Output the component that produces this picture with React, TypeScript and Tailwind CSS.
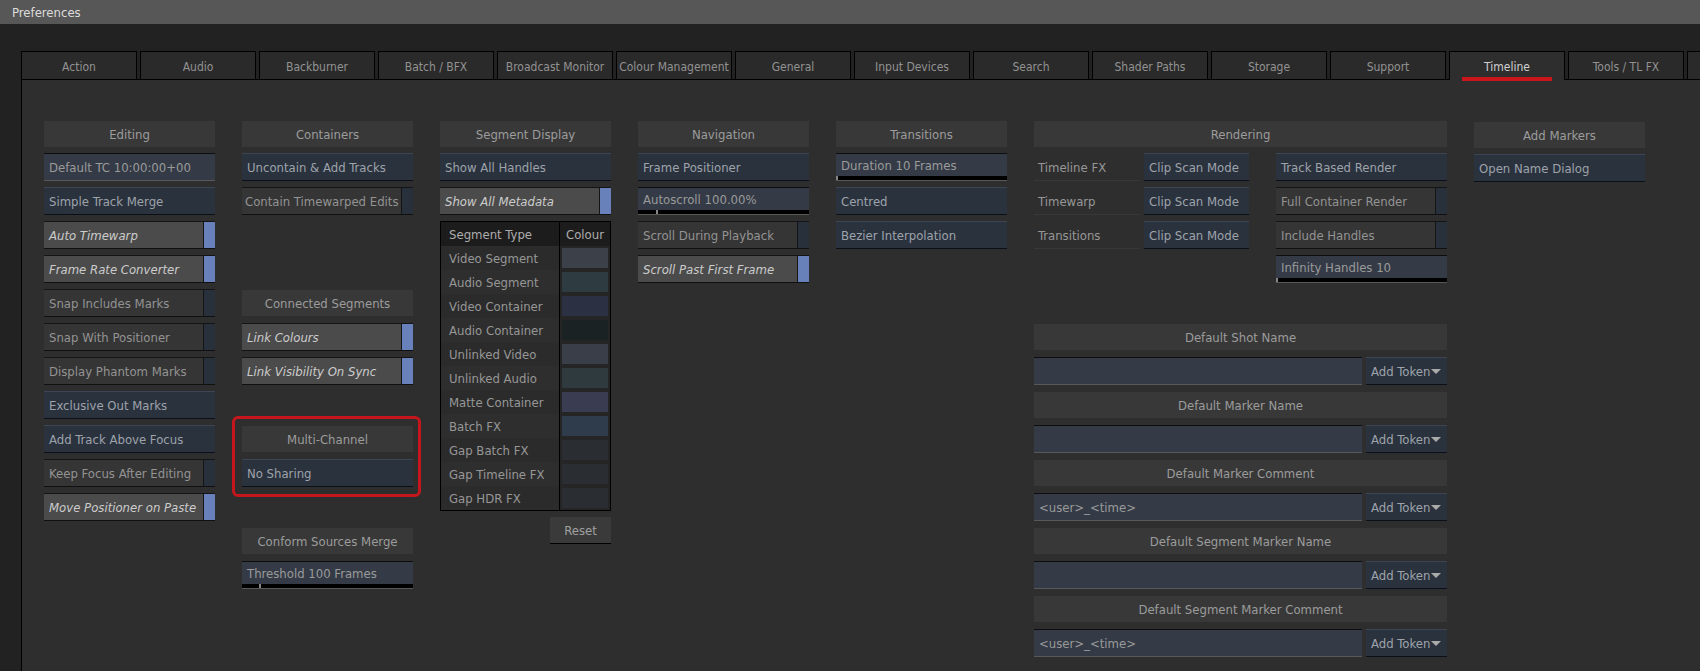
import React from "react";

const tabs = [
  "Action",
  "Audio",
  "Backburner",
  "Batch / BFX",
  "Broadcast Monitor",
  "Colour Management",
  "General",
  "Input Devices",
  "Search",
  "Shader Paths",
  "Storage",
  "Support",
  "Timeline",
  "Tools / TL FX",
  "",
];

const segmentRows = [
  { name: "Video Segment", colour: "bg-[#3b4049]" },
  { name: "Audio Segment", colour: "bg-[#2e3b40]" },
  { name: "Video Container", colour: "bg-[#2b3143]" },
  { name: "Audio Container", colour: "bg-[#1b2224]" },
  { name: "Unlinked Video", colour: "bg-[#3a3e48]" },
  { name: "Unlinked Audio", colour: "bg-[#2e3a3e]" },
  { name: "Matte Container", colour: "bg-[#3a3d52]" },
  { name: "Batch FX", colour: "bg-[#2e3c4c]" },
  { name: "Gap Batch FX", colour: "bg-[#2a2d31]" },
  { name: "Gap Timeline FX", colour: "bg-[#2a2d31]" },
  { name: "Gap HDR FX", colour: "bg-[#2a2d32]" },
];

function Header({ label, mid }: { label: string; mid?: boolean }) {
  return (
    <div className={mid ? "h-[28px] pt-px" : "h-[26px]"}>
      <div className="flex h-[26px] items-center justify-center bg-[#383838] pt-px text-[#9c9c9c]">
        {label}
      </div>
    </div>
  );
}

function Btn({ label, className = "" }: { label: string; className?: string }) {
  return (
    <div
      className={`flex h-[28px] items-center whitespace-nowrap border-y border-t-[#3c4553] border-b-[#0b1018] bg-[#2a323e] px-[5px] pt-px text-[#9ea3aa] ${className}`}
    >
      {label}
    </div>
  );
}

function Field({
  label,
  marker,
  className = "",
}: {
  label: string;
  marker?: string;
  className?: string;
}) {
  return (
    <div
      className={`flex h-[28px] flex-col border-y border-t-[#0d0d0d] border-b-[#585858] bg-[#343b46] ${className}`}
    >
      <div className="flex flex-1 items-center whitespace-nowrap px-[5px] pt-px text-[#9a9a9a]">
        {label}
      </div>
      {marker && (
        <div className="relative h-[4px] bg-black">
          <div className={`absolute top-0 h-full w-[2px] bg-[#858585] ${marker}`} />
        </div>
      )}
    </div>
  );
}

function Toggle({
  label,
  on,
  pad = "px-[5px]",
}: {
  label: string;
  on?: boolean;
  pad?: string;
}) {
  return (
    <div className="flex h-[28px] border-y border-t-[#151515] border-b-[#101010]">
      <div
        className={`flex flex-1 items-center overflow-hidden whitespace-nowrap pt-px ${pad} ${
          on ? "bg-[#4b4b4b] italic text-[#cccccc]" : "bg-[#353535] text-[#939393]"
        }`}
      >
        {label}
      </div>
      <div
        className={`w-[12px] border-l border-l-[#151515] ${
          on ? "bg-[#6981bb]" : "bg-[#28303c]"
        }`}
      />
    </div>
  );
}

function Label({ label }: { label: string }) {
  return (
    <div className="flex h-[28px] w-[106px] items-center border-b border-b-[#383838] px-[4px] pt-px text-[#979797]">
      {label}
    </div>
  );
}

function InputRow({ value = "" }: { value?: string }) {
  return (
    <div className="flex gap-[4px]">
      <Field label={value} className="w-[328px]" />
      <div className="flex h-[28px] w-[81px] items-center border-y border-t-[#3c4553] border-b-[#0b1018] bg-[#2a323e] pl-[5px] pt-px text-[#9ea3aa]">
        Add Token
        <svg width="10" height="6" viewBox="0 0 10 6" className="ml-px">
          <polygon points="0,0 10,0 5,5" fill="#aaaaaa" />
        </svg>
      </div>
    </div>
  );
}

function SegmentTable() {
  return (
    <div className="border border-black">
      <div className="flex h-[24px] bg-[#1c1c1c] text-[#adadad]">
        <div className="flex w-[119px] items-center border-r border-black pl-[8px]">
          Segment Type
        </div>
        <div className="flex flex-1 items-center justify-center">Colour</div>
      </div>
      {segmentRows.map((row, i) => (
        <div key={row.name} className="flex h-[24px]">
          <div
            className={`flex w-[119px] items-center border-r border-black pl-[8px] text-[#979797] ${
              i % 2 === 0 ? "bg-[#2b2b2b]" : "bg-[#2e2e2e]"
            }`}
          >
            {row.name}
          </div>
          <div className="flex-1 bg-[#252525] p-[2px]">
            <div className={`h-full ${row.colour}`} />
          </div>
        </div>
      ))}
    </div>
  );
}

export default function App() {
  return (
    <div className="h-[671px] w-[1700px] overflow-hidden bg-[#222222] font-['DejaVu_Sans_Condensed','DejaVu_Sans',sans-serif] text-[13px] leading-none font-stretch-condensed">
      <div className="flex h-[24px] items-center bg-[#575757] pl-[12px] text-[#dcdcdc]">
        Preferences
      </div>

      <div className="pl-[21px] pt-[27px]">
        <div className="flex h-[28px] items-start gap-[3px]">
          {tabs.map((t, i) => {
            const active = t === "Timeline";
            return (
              <div
                key={i}
                className={`relative flex w-[116px] shrink-0 items-center justify-center border-x border-t border-black pt-[2px] text-[12px] ${
                  active
                    ? "z-10 h-[29px] bg-[#2e2e2e] pb-px text-[#d0d0d0]"
                    : "h-[28px] bg-[#2a2a2a] text-[#929292]"
                }`}
              >
                {t}
                {active && (
                  <div className="absolute -bottom-px left-1/2 h-[4px] w-[90px] -translate-x-1/2 bg-[#c8161c]" />
                )}
              </div>
            );
          })}
        </div>

        <div className="h-[592px] border-l border-t border-black bg-[#2e2e2e] pl-[22px] pt-[41px]">
          <div className="flex items-start gap-[27px]">
            {/* Editing */}
            <div className="flex w-[171px] flex-col gap-[6px]">
              <Header label="Editing" />
              <Field label="Default TC 10:00:00+00" />
              <Btn label="Simple Track Merge" />
              <Toggle label="Auto Timewarp" on />
              <Toggle label="Frame Rate Converter" on />
              <Toggle label="Snap Includes Marks" />
              <Toggle label="Snap With Positioner" />
              <Toggle label="Display Phantom Marks" />
              <Btn label="Exclusive Out Marks" />
              <Btn label="Add Track Above Focus" />
              <Toggle label="Keep Focus After Editing" />
              <Toggle label="Move Positioner on Paste" on />
            </div>

            {/* Containers */}
            <div className="flex w-[171px] flex-col gap-[6px]">
              <Header label="Containers" />
              <Btn label="Uncontain & Add Tracks" />
              <Toggle label="Contain Timewarped Edits" pad="pl-[3px]" />
              <div className="h-[62px]" />
              <Header label="Connected Segments" mid />
              <Toggle label="Link Colours" on />
              <Toggle label="Link Visibility On Sync" on />
              <div className="h-[28px]" />
              <div className="relative flex flex-col gap-[6px]">
                <Header label="Multi-Channel" mid />
                <Btn label="No Sharing" />
                <div className="absolute -bottom-[10px] -left-[10px] -right-[8px] -top-[9px] rounded-[6px] border-[3px] border-[#c4161c]" />
              </div>
              <div className="h-[28px]" />
              <Header label="Conform Sources Merge" mid />
              <Field label="Threshold 100 Frames" marker="left-[17px]" />
            </div>

            {/* Segment Display */}
            <div className="flex w-[171px] flex-col gap-[6px]">
              <Header label="Segment Display" />
              <Btn label="Show All Handles" />
              <Toggle label="Show All Metadata" on />
              <SegmentTable />
              <div className="flex h-[27px] w-[61px] items-center justify-center self-end border-b border-black bg-[#3a3a3a] text-[#a0a0a0]">
                Reset
              </div>
            </div>

            {/* Navigation */}
            <div className="flex w-[171px] flex-col gap-[6px]">
              <Header label="Navigation" />
              <Btn label="Frame Positioner" />
              <Field label="Autoscroll 100.00%" marker="left-[18px]" />
              <Toggle label="Scroll During Playback" />
              <Toggle label="Scroll Past First Frame" on />
            </div>

            {/* Transitions */}
            <div className="flex w-[171px] flex-col gap-[6px]">
              <Header label="Transitions" />
              <Field label="Duration 10 Frames" marker="left-0" />
              <Btn label="Centred" />
              <Btn label="Bezier Interpolation" />
            </div>

            {/* Rendering */}
            <div className="flex w-[413px] flex-col gap-[6px]">
              <Header label="Rendering" />
              <div className="flex gap-[27px]">
                <div className="flex w-[215px] flex-col gap-[6px]">
                  {["Timeline FX", "Timewarp", "Transitions"].map((l) => (
                    <div key={l} className="flex gap-[4px]">
                      <Label label={l} />
                      <Btn label="Clip Scan Mode" className="w-[105px]" />
                    </div>
                  ))}
                </div>
                <div className="flex w-[171px] flex-col gap-[6px]">
                  <Btn label="Track Based Render" />
                  <Toggle label="Full Container Render" />
                  <Toggle label="Include Handles" />
                  <Field label="Infinity Handles 10" marker="left-0" />
                </div>
              </div>
              <div className="h-[28px]" />
              <Header label="Default Shot Name" mid />
              <InputRow />
              <Header label="Default Marker Name" mid />
              <InputRow />
              <Header label="Default Marker Comment" mid />
              <InputRow value="<user>_<time>" />
              <Header label="Default Segment Marker Name" mid />
              <InputRow />
              <Header label="Default Segment Marker Comment" mid />
              <InputRow value="<user>_<time>" />
            </div>

            {/* Add Markers */}
            <div className="flex w-[171px] flex-col gap-[6px] pt-px">
              <Header label="Add Markers" />
              <Btn label="Open Name Dialog" />
            </div>
          </div>
        </div>
      </div>
    </div>
  );
}
